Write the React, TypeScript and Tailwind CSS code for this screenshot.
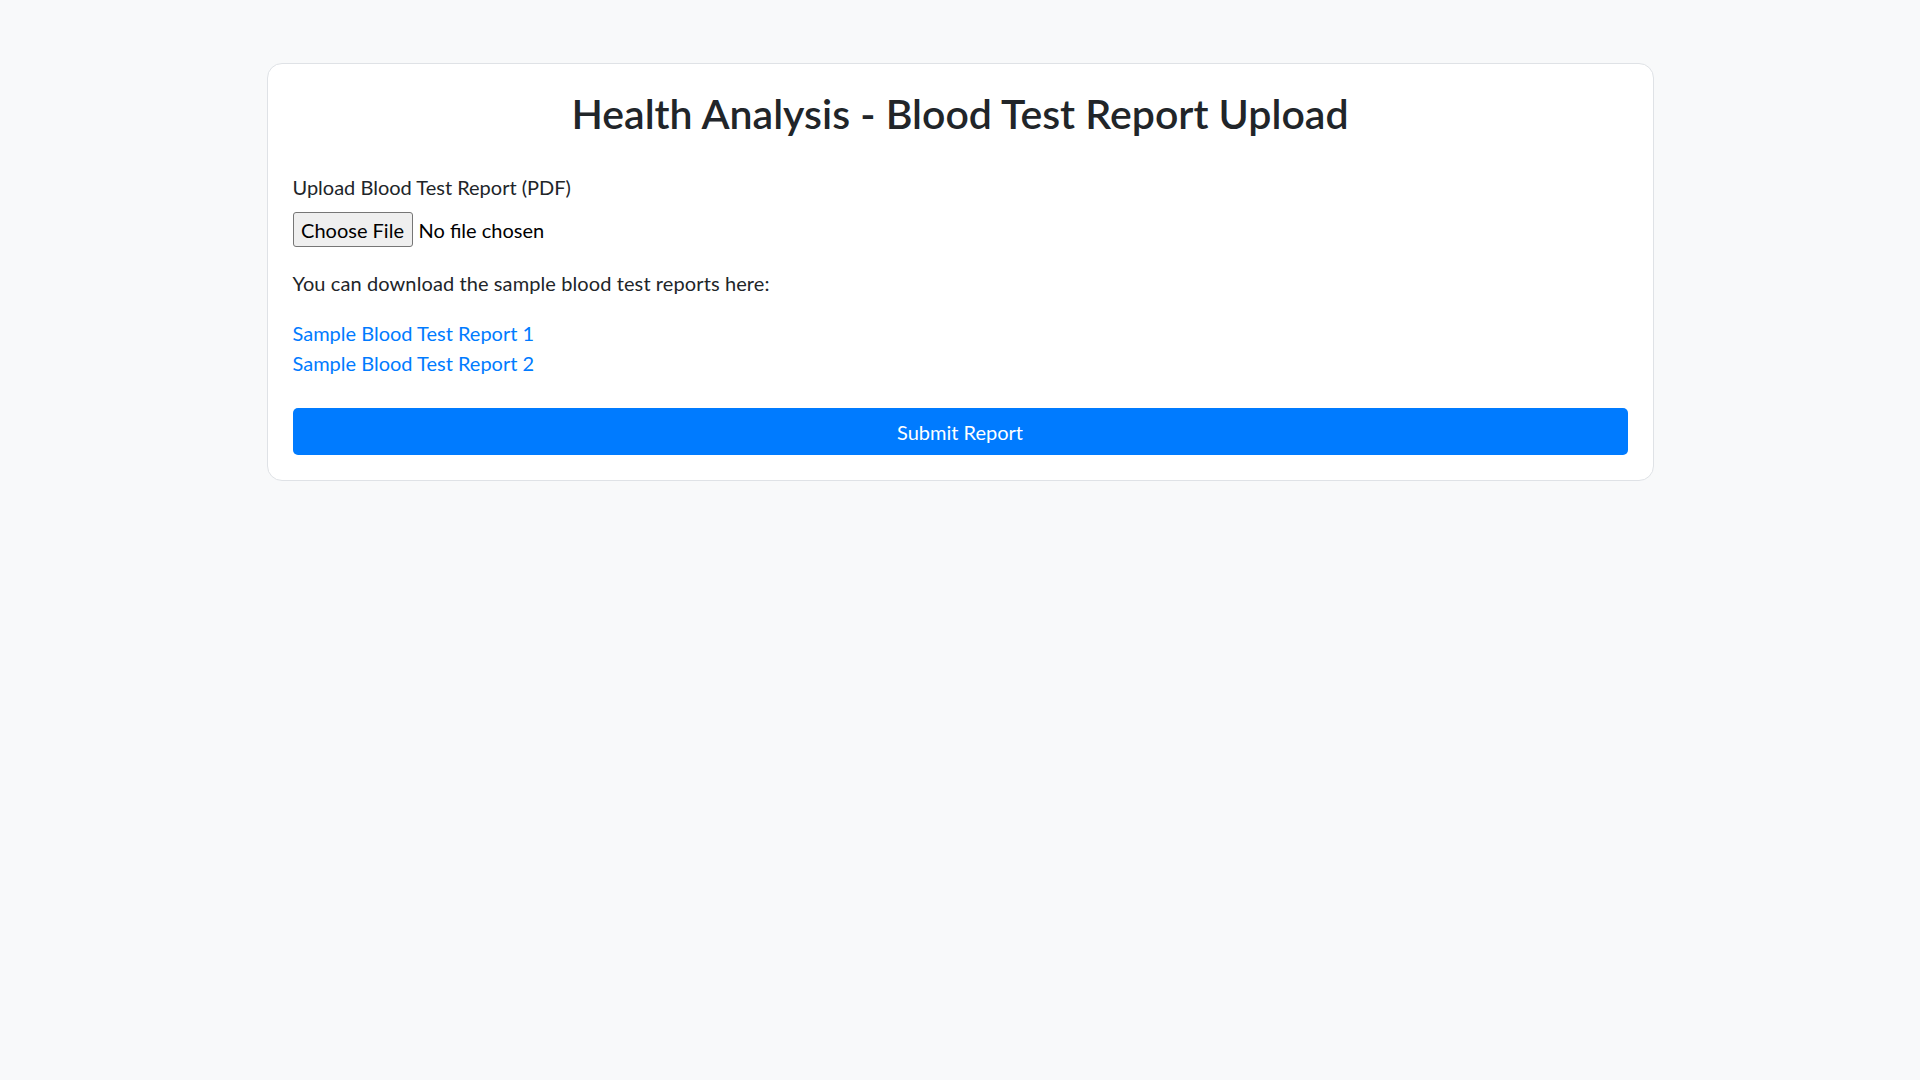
const samples = [
  { label: "Sample Blood Test Report 1", href: "#sample-1" },
  { label: "Sample Blood Test Report 2", href: "#sample-2" },
];

export default function App() {
  return (
    <div className="min-h-screen bg-[#f8f9fa] pt-[63px] text-[#212529] font-['Lato','Noto_Sans',sans-serif]">
      <div className="mx-auto w-[1387px] rounded-[15px] border border-[#dfe2e6] bg-white px-[25px] pt-6 pb-[25px]">
        <h1 className="mt-[2px] text-center text-[41px] leading-[48px] font-semibold text-[#212529]">
          Health Analysis - Blood Test Report Upload
        </h1>

        <form onSubmit={(e) => e.preventDefault()}>
          <label className="mt-[34px] block text-[20px] leading-[30px]">
            Upload Blood Test Report (PDF)
          </label>

          {/* file picker */}
          <div className="mt-[10px] flex h-[35px] items-center">
            <button
              type="button"
              className="flex h-[35px] w-[120px] items-center justify-center rounded-[3px] border border-[#767676] bg-[#efefef] text-[20px] text-black"
            >
              Choose File
            </button>
            <span className="ml-[6px] text-[20px] text-black">No file chosen</span>
          </div>

          <p className="mt-[21px] text-[20px] leading-[30px] tracking-[0.1px]">
            You can download the sample blood test reports here:
          </p>

          <div className="mt-[20px] flex flex-col items-start">
            {samples.map((s) => (
              <a key={s.href} href={s.href} className="text-[20px] leading-[30px] text-[#007bff]">
                {s.label}
              </a>
            ))}
          </div>

          <button
            type="submit"
            className="mt-[30px] flex h-[47px] w-full items-center justify-center rounded-[5px] bg-[#007bff] text-[20px] text-white"
          >
            Submit Report
          </button>
        </form>
      </div>
    </div>
  );
}
